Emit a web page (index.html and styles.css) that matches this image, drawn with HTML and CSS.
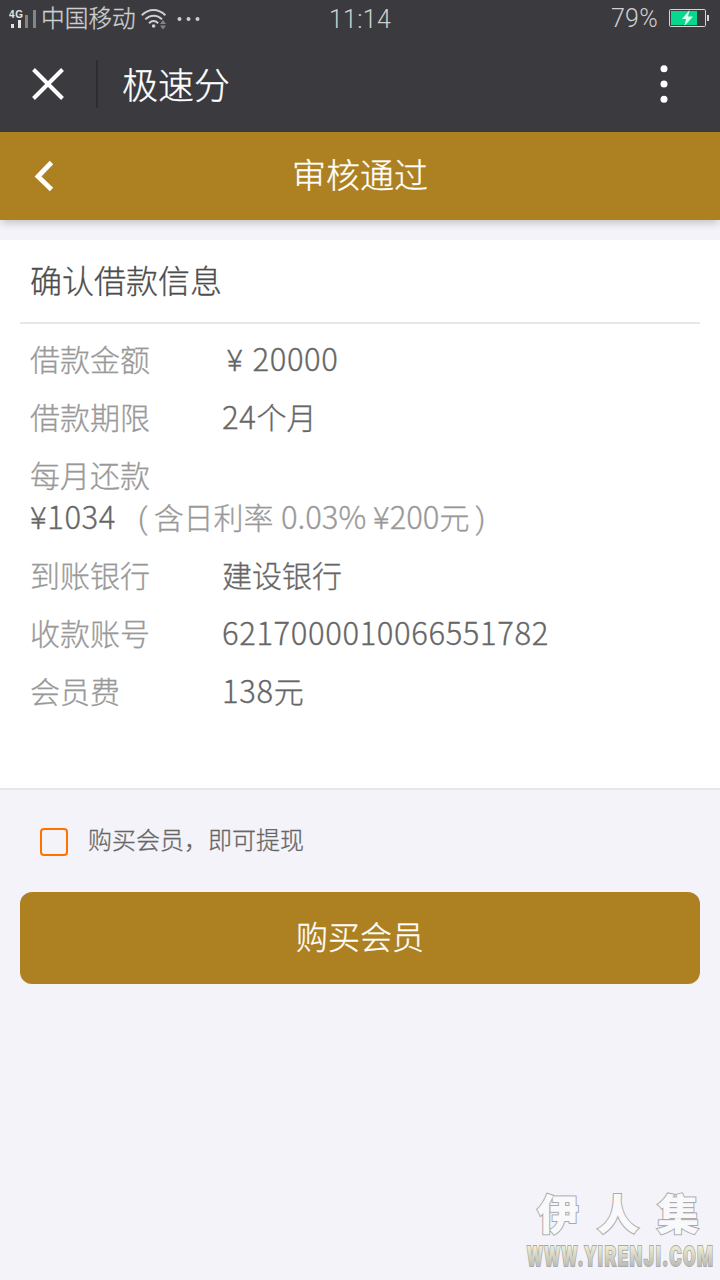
FILE: index.html
```html
<!DOCTYPE html>
<html lang="zh-CN">
<head>
<meta charset="utf-8">
<title>极速分</title>
<link rel="stylesheet" href="styles.css">
</head>
<body>
<div class="statusbar">
  <div class="status-left">
    <svg class="signal" width="28" height="22" viewBox="0 0 28 22">
      <text class="net" x="0" y="8" textLength="14">4G</text>
      <path d="M2 14h3v4H2zM9 10h3v8H9z" fill="#e4e4e4"/>
      <path d="M16 5h3v13h-3zM24 0h3v18h-3z" fill="#858587"/>
    </svg>
    <span class="carrier">中国移动</span>
    <svg class="wifi" width="26" height="22" viewBox="0 0 26 22" fill="none" stroke="#cfcfd0" stroke-width="2">
      <path d="M.8 7.2C8 .2 17 .2 24.4 7.2M4.3 11.4c5-5 11.800-5 16.800 0M8 15.200c3-2.800 6.200-2.800 9.200 0"/>
      <circle cx="12.600" cy="18" r="1.800" fill="#cfcfd0" stroke="none"/>
      <path d="M19 16h6l-3-4zM19 17.500h6l-3 4z" fill="#858587" stroke="none"/>
    </svg>
    <svg class="dots" width="24" height="4" viewBox="0 0 24 4" fill="#cfcfd0"><circle cx="2.500" cy="2" r="2"/><circle cx="11.500" cy="2" r="2"/><circle cx="20.500" cy="2" r="2"/></svg>
  </div>
  <div class="clock">11:14</div>
  <div class="status-right">
    <span class="percent">79%</span>
    <svg class="battery" width="40" height="18" viewBox="0 0 40 18">
      <rect x=".5" y=".5" width="36" height="17" rx="1.200" fill="none" stroke="#d6d6d6"/>
      <path d="M2 2h26v14H2z" fill="#06d88d"/>
      <path d="M20.500 1 13 10h4l-1.500 7L24 7.500h-5z" fill="#d8fff0"/>
      <path d="M38 6h2v6h-2z" fill="#d6d6d6"/>
    </svg>
  </div>
</div>
<div class="appbar">
  <svg class="close" width="32" height="32" viewBox="0 0 32 32" stroke="#fff" stroke-width="4"><path d="M1.500 1.500l29 29M30.500 1.500l-29 29"/></svg>
  <span class="divider"></span>
  <span class="app-title">极速分</span>
  <svg class="more" width="8" height="40" viewBox="0 0 8 40" fill="#fff"><circle cx="4" cy="4.700" r="3.500"/><circle cx="4" cy="20" r="3.500"/><circle cx="4" cy="35.300" r="3.500"/></svg>
</div>
<header class="navbar">
  <svg class="back" width="20" height="32" viewBox="0 0 20 32" fill="none" stroke="#fff" stroke-width="4.800"><path d="M17.500 2.500 4 16.500l13.500 13"/></svg>
  <h1 class="nav-title">审核通过</h1>
</header>
<main>
  <section class="card">
    <h2 class="card-title">确认借款信息</h2>
    <dl class="details">
      <div class="row"><dt>借款金额</dt><dd><span class="yen">¥</span><span class="num">20000</span></dd></div>
      <div class="row"><dt>借款期限</dt><dd><span class="num">24</span>个月</dd></div>
      <div class="row monthly"><dt>每月还款</dt><dd><span class="num">¥1034</span><span class="note"><span class="open">(</span>含日利率 <span class="num rate">0.03% ¥200</span>元<span class="shut">)</span></span></dd></div>
      <div class="row"><dt>到账银行</dt><dd>建设银行</dd></div>
      <div class="row"><dt>收款账号</dt><dd><span class="num">6217000010066551782</span></dd></div>
      <div class="row"><dt>会员费</dt><dd><span class="num">138</span>元</dd></div>
    </dl>
  </section>
  <label class="agree"><input class="box" type="checkbox"><span>购买会员，即可提现</span></label>
  <button class="buy">购买会员</button>
</main>
<svg class="watermark" width="200" height="120" viewBox="0 0 200 120">
  <defs><linearGradient id="wm" x1="0" y1="0" x2="0" y2="1"><stop offset=".2" stop-color="#eeeed2"/><stop offset=".85" stop-color="#b8b8b4"/></linearGradient></defs>
  <text class="wm-name" x="17 77 137" y="70">伊人集</text>
  <text class="wm-url" transform="translate(7 105.500) scale(.65 1)" x="0" y="0" textLength="286">WWW.YIRENJI.COM</text>
</svg>
</body>
</html>
```

FILE: styles.css
```css
* { box-sizing: border-box; }
body {
  margin: 0;
  height: 1280px;
  position: relative;
  overflow: hidden;
  background: #f4f3f9;
  color: #666;
  font-family: Roboto, "Noto Sans CJK SC", sans-serif;
  font-weight: 300;
  -webkit-text-stroke: .3px;
}
svg { display: block; flex: none; }
h1, h2, dl, dd { margin: 0; font-weight: 300; }

.statusbar {
  height: 36px;
  display: grid;
  grid-template-columns: 1fr auto 1fr;
  align-items: center;
  padding: 0 11px 0 9px;
  background: #3a3a3f;
  color: #cfcfd0;
  font-size: 24px;
  line-height: 36px;
}
.status-left, .status-right { display: flex; align-items: center; }
.status-right { justify-content: flex-end; gap: 11px; }
.net { font: bold 10px "Liberation Sans", sans-serif; fill: #e4e4e4; -webkit-text-stroke: 0; }
.signal { margin-top: 4px; }
.carrier { margin-left: 4px; font-size: 23.700px; }
.wifi { margin-left: 5px; }
.dots { margin-left: 10px; }
.clock { font-size: 25px; letter-spacing: .3px; padding: 2px 0 0 2px; -webkit-text-stroke: 0; }
.percent { font-size: 25px; letter-spacing: .3px; -webkit-text-stroke: 0; }
.battery { margin-bottom: 2px; }

.appbar {
  height: 96px;
  display: flex;
  align-items: center;
  padding: 0 52px 0 32px;
  background: #3a3a3f;
  color: #fff;
}
.divider { width: 2px; height: 48px; margin-left: 32px; background: #2e2e32; }
.app-title { margin-left: 24px; padding-top: 6px; font-size: 36px; line-height: 48px; }
.more { margin-left: auto; }

.navbar {
  height: 88px;
  display: grid;
  grid-template-columns: 40px 1fr 40px;
  align-items: center;
  padding: 0 34px;
  background: #ad8121;
  color: #fff;
  box-shadow: 0 4px 8px -1px rgba(0, 0, 0, .2);
}
.nav-title { text-align: center; font-size: 34px; line-height: 86px; }

.card {
  height: 550px;
  margin-top: 20px;
  padding: 0 20px;
  background: #fff;
  border-bottom: 2px solid #e7e7e7;
}
.card-title {
  height: 84px;
  padding-left: 10px;
  border-bottom: 2px solid #e7e7e7;
  color: #4d4d4d;
  font-size: 32px;
  line-height: 85px;
}
.details { padding: 16px 10px 0; }
.row { display: flex; margin-bottom: 16px; font-size: 30px; line-height: 42px; }
.row dt { width: 192px; flex: none; color: #999; }
.monthly { flex-direction: column; }
.num {
  font-family: "Noto Sans CJK SC", sans-serif;
  font-size: 31px;
  line-height: 0;
  letter-spacing: .62px;
}
.rate { letter-spacing: 0; }
.yen { padding: 0 10px 0 5px; }
.note { color: #999; }
.open { padding: 0 6px 0 22px; }
.shut { padding-left: 6px; }

.agree {
  display: flex;
  align-items: center;
  gap: 20px;
  height: 102px;
  padding-left: 40px;
  font-size: 24px;
  line-height: 36px;
}
.box {
  appearance: none;
  width: 28px;
  height: 28px;
  margin: 2px 0 0;
  border: 2px solid #ff7200;
  border-radius: 4px;
}
.buy {
  display: block;
  width: 680px;
  height: 92px;
  margin: 0 auto;
  padding: 0;
  border: 0;
  border-radius: 12px;
  background: #ad8121;
  color: #fff;
  font: inherit;
  font-size: 32px;
  line-height: 90px;
}
.watermark { position: absolute; left: 520px; top: 1160px; -webkit-text-stroke: 0; }
.wm-name {
  font: 900 42px "Noto Sans CJK SC", sans-serif;
  fill: #f9f9fb;
  stroke: #aaa;
  stroke-width: 2;
  paint-order: stroke;
}
.wm-url {
  font: 900 28px Roboto, sans-serif;
  fill: url(#wm);
  stroke: #aaa;
  stroke-width: 2;
  paint-order: stroke;
}
```
